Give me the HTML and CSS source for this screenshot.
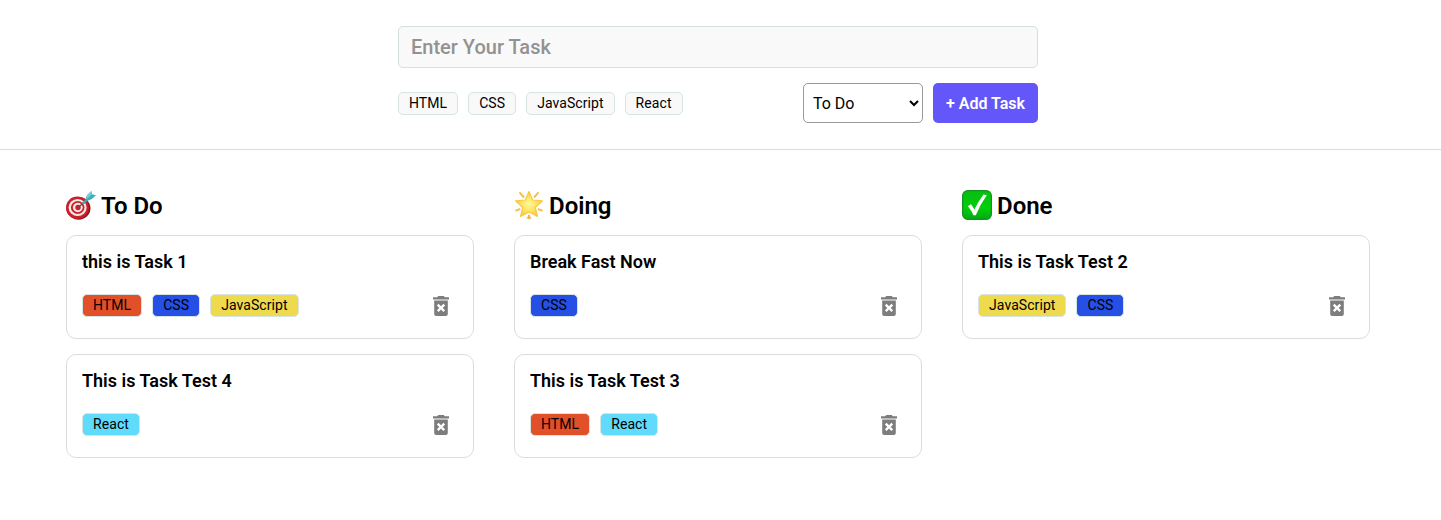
FILE: index.html
```html
<!DOCTYPE html>
<html lang="en">
<head>
<meta charset="utf-8">
<title>Task Board</title>
<link rel="stylesheet" href="styles.css">
</head>
<body>
<svg class="defs" width="0" height="0" aria-hidden="true">
  <defs>
    <symbol id="trash" viewBox="0 0 16 20">
      <path fill-rule="evenodd" d="M0 1.2h4.2L5.2 0h5.6l1 1.2H16v2.2H0zM1.2 4.6h13.6V18q0 2-2 2H3.200q-2 0-2-2zM5.600 7.700 3.900 9.400 6.300 11.900 3.900 14.300 5.600 16 8 13.600 10.400 16 12.100 14.300 9.700 11.900 12.100 9.400 10.400 7.700 8 10.200z"/>
    </symbol>
    <radialGradient id="star-fill"><stop offset="0" stop-color="#fff7a0"/><stop offset=".5" stop-color="#ffe669"/><stop offset="1" stop-color="#fcc840"/></radialGradient>
    <linearGradient id="green-fill" x2="0" y2="1"><stop stop-color="#08bd12"/><stop offset=".6" stop-color="#00cf0b"/><stop offset="1" stop-color="#05a812"/></linearGradient>
  </defs>
</svg>
<header class="app-header">
  <form class="task-form">
    <input class="task-input" type="text" placeholder="Enter Your Task">
    <div class="form-row">
      <div class="tags">
        <button type="button" class="tag">HTML</button>
        <button type="button" class="tag">CSS</button>
        <button type="button" class="tag">JavaScript</button>
        <button type="button" class="tag">React</button>
      </div>
      <div class="actions">
        <select class="status"><option>To Do</option><option>Doing</option><option>Done</option></select>
        <button type="button" class="submit">+ Add Task</button>
      </div>
    </div>
  </form>
</header>
<main class="board">
  <section class="column">
    <h2 class="heading">
      <svg class="heading-icon" viewBox="0 0 30 30">
        <ellipse cx="12.500" cy="18.300" rx="12" ry="11.400" fill="#8d1820"/>
        <ellipse cx="11.400" cy="17.700" rx="11.400" ry="11.200" fill="#c9202b"/>
        <ellipse cx="11.600" cy="17.500" rx="9" ry="8.600" fill="#f6eae8"/>
        <ellipse cx="11.700" cy="17.500" rx="6.800" ry="6.500" fill="#c9202b"/>
        <ellipse cx="11.800" cy="17.500" rx="4.900" ry="4.700" fill="#f6eae8"/>
        <circle cx="12" cy="17.500" r="2.700" fill="#c9202b"/>
        <path d="M12 17.500 21 10" stroke="#8a3a42" stroke-width="1.300"/>
        <path d="M16.500 13.800 23 8" stroke="#3ba6b4" stroke-width="2.400"/>
        <path d="M19.500 8.500 21.200 5 25.500 1 26 4.200 30 5.200 25.500 9.300 21 10.800z" fill="#3daebb"/>
        <path d="M20.500 9.500 26 4.200 25.500 1 21.200 5z" fill="#78cdd4"/>
      </svg>
      <span class="heading-text">To Do</span>
    </h2>
    <article class="card">
      <p class="card-title">this is Task 1</p>
      <div class="card-row">
        <div class="tags"><span class="tag html">HTML</span><span class="tag css">CSS</span><span class="tag js">JavaScript</span></div>
        <svg class="trash"><use href="#trash"/></svg>
      </div>
    </article>
    <article class="card">
      <p class="card-title">This is Task Test 4</p>
      <div class="card-row">
        <div class="tags"><span class="tag react">React</span></div>
        <svg class="trash"><use href="#trash"/></svg>
      </div>
    </article>
  </section>
  <section class="column">
    <h2 class="heading">
      <svg class="heading-icon" viewBox="0 0 30 30">
        <path d="M6 2.800 9.500 7M24 2.800 20.500 7M2.200 20.500 5.500 19.300M27.800 20.500 24.500 19.300M15 26V28.500" stroke="#f3c152" stroke-width="2" stroke-linecap="round"/>
        <path d="M13.500 27 15 24 16.500 27 18 28.500H12z" fill="#edb545"/>
        <path d="M15 1.500 18.700 10 28.500 10.900 21.200 17.500 23.500 26.500 15 22 6.500 26.500 8.800 17.500 1.500 10.900 11.300 10z" fill="url(#star-fill)" stroke="#f9c944" stroke-width="1.200" stroke-linejoin="round"/>
      </svg>
      <span class="heading-text">Doing</span>
    </h2>
    <article class="card">
      <p class="card-title">Break Fast Now</p>
      <div class="card-row">
        <div class="tags"><span class="tag css">CSS</span></div>
        <svg class="trash"><use href="#trash"/></svg>
      </div>
    </article>
    <article class="card">
      <p class="card-title">This is Task Test 3</p>
      <div class="card-row">
        <div class="tags"><span class="tag html">HTML</span><span class="tag react">React</span></div>
        <svg class="trash"><use href="#trash"/></svg>
      </div>
    </article>
  </section>
  <section class="column">
    <h2 class="heading">
      <svg class="heading-icon" viewBox="0 0 30 30">
        <rect x=".6" y=".6" width="28.800" height="28.800" rx="5.200" fill="url(#green-fill)" stroke="#159221" stroke-width="1.200"/>
        <path d="M5.900 16.300 9 14.300 12.500 19.500Q16.500 11 21.500 4.500L24.800 5.200Q18 14.500 13.800 25.300H11.400Q9.500 20.500 5.900 16.300z" fill="#fff"/>
      </svg>
      <span class="heading-text">Done</span>
    </h2>
    <article class="card">
      <p class="card-title">This is Task Test 2</p>
      <div class="card-row">
        <div class="tags"><span class="tag js">JavaScript</span><span class="tag css">CSS</span></div>
        <svg class="trash"><use href="#trash"/></svg>
      </div>
    </article>
  </section>
</main>
</body>
</html>
```
FILE: styles.css
```css
* {
  box-sizing: border-box;
  margin: 0;
  padding: 0;
  font-family: Roboto, sans-serif;
}

body {
  background: #fff;
  color: #000;
}

.defs {
  position: absolute;
}

.app-header {
  height: 150px;
  padding: 26px 5px 0 0;
  border-bottom: 1px solid #dcdcdc;
}

.task-form {
  width: 640px;
  margin: 0 auto;
}

.task-input {
  display: block;
  width: 100%;
  height: 42px;
  margin-bottom: 15px;
  padding: 0 12px;
  background: #f9f9f9;
  border: 1px solid #d2e1de;
  border-radius: 5px;
  font-size: 20px;
  font-weight: 500;
}

.task-input::placeholder {
  color: #929292;
}

.form-row,
.card-row {
  display: flex;
  align-items: center;
  justify-content: space-between;
}

.tags,
.actions {
  display: flex;
  gap: 10px;
}

.tag {
  height: 23px;
  padding: 0 10px;
  background: #f9f9f9;
  border: 1px solid #d7e4e4;
  border-radius: 5px;
  color: #000;
  font-size: 14px;
  font-weight: 400;
  letter-spacing: 0.07px;
  line-height: 21px;
}

.html { background: #e15028; }
.css { background: #254fe5; }
.js { background: #efda4e; }
.react { background: #61dbfb; }

.status {
  width: 120px;
  height: 40px;
  padding: 0 5px;
  background: #fff;
  border: 1px solid #999;
  border-radius: 5px;
  color: #000;
  font-size: 16px;
  font-weight: 400;
}

.submit {
  width: 105px;
  height: 40px;
  background: #6457f9;
  border: 0;
  border-radius: 5px;
  color: #fff;
  font-size: 16px;
  font-weight: 600;
  white-space: nowrap;
}

.board {
  display: grid;
  grid-template-columns: repeat(3, 408px);
  gap: 40px;
  justify-content: center;
  padding: 40px 5px 0 0;
}

.heading {
  display: flex;
  align-items: center;
  gap: 5px;
  height: 30px;
  margin-bottom: 15px;
  font-size: 24px;
  font-weight: 600;
}

.heading-text {
  padding-top: 2px;
}

.heading-icon {
  width: 30px;
  height: 30px;
}

.card {
  height: 104px;
  margin-bottom: 15px;
  padding: 15px;
  border: 1px solid #dcdcdc;
  border-radius: 10px;
}

.card-title {
  margin-bottom: 17px;
  font-size: 18px;
  font-weight: 600;
  line-height: 21px;
}

.card-row {
  height: 32px;
  padding-right: 9px;
}

.trash {
  width: 16px;
  height: 20px;
  margin-top: 2px;
  fill: #7d7d7d;
}
```
